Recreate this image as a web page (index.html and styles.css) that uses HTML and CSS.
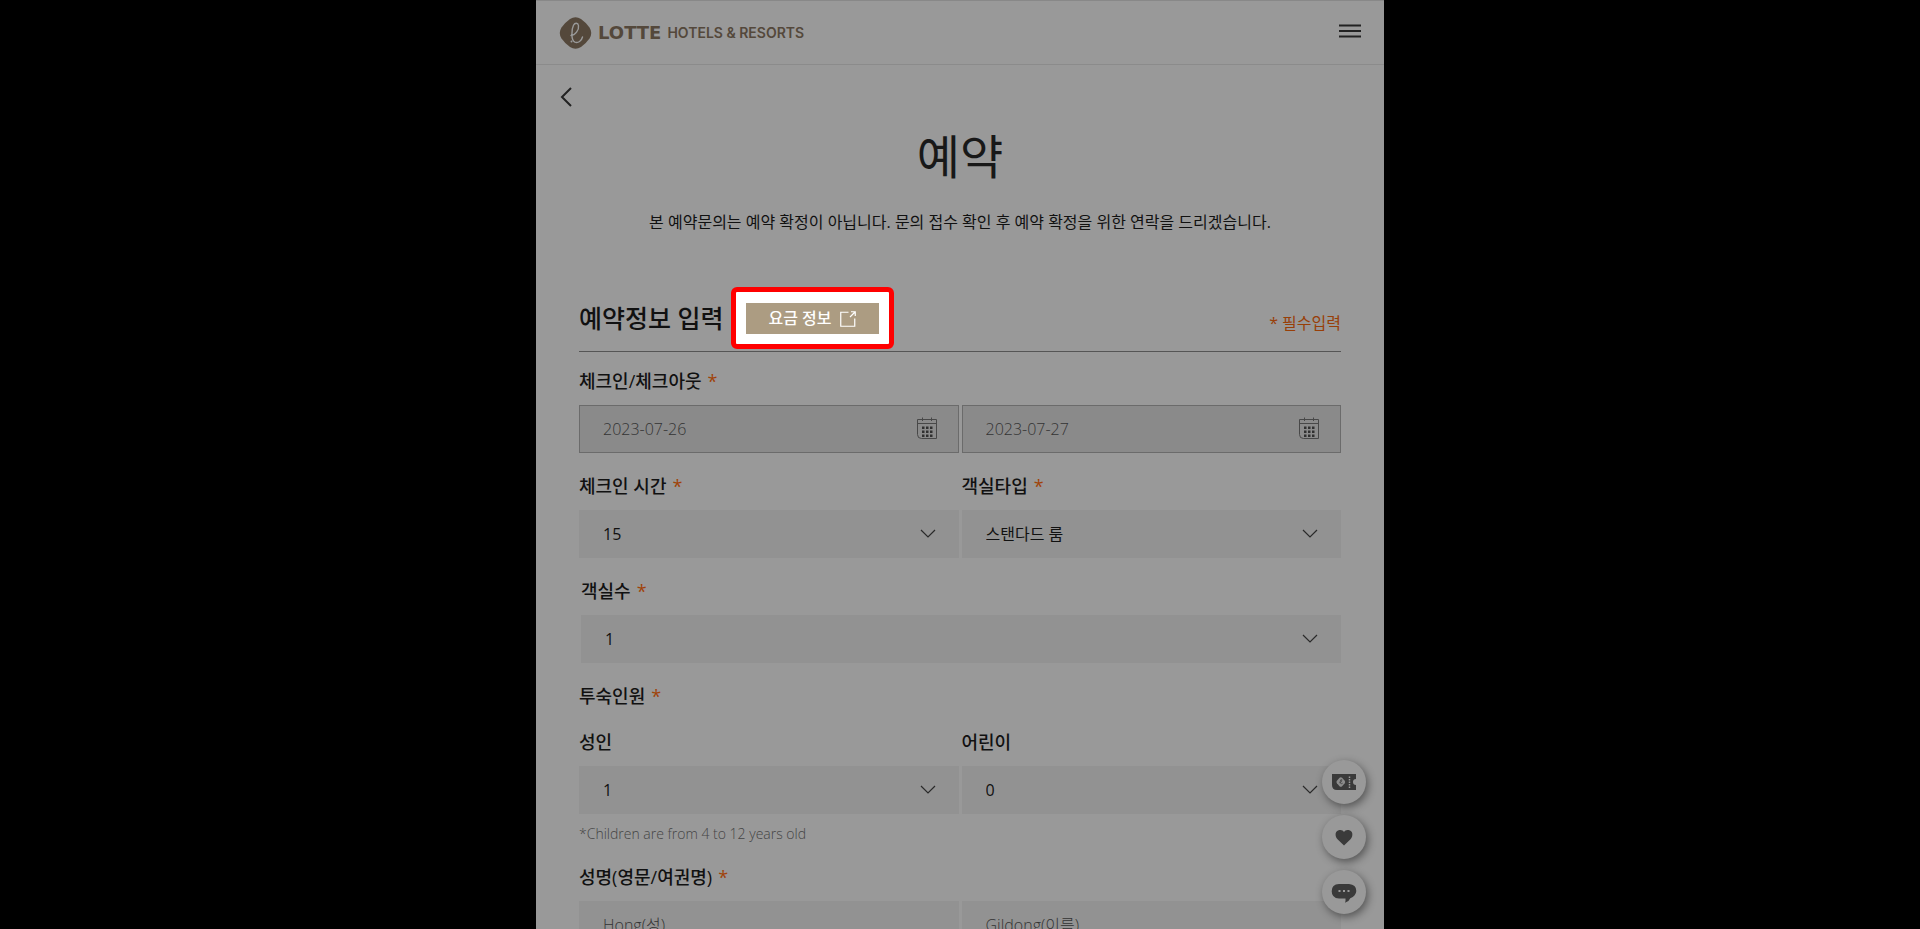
FILE: index.html
```html
<!DOCTYPE html>
<html lang="ko">
<head>
<meta charset="utf-8">
<meta name="viewport" content="width=device-width, initial-scale=1">
<title>예약 - LOTTE HOTELS &amp; RESORTS</title>
<link rel="stylesheet" href="styles.css">
</head>
<body>
<svg class="sprite" aria-hidden="true">
  <symbol id="calendar" viewBox="0 0 22 23">
    <path d="M1.5 2.5h19v19h-15q-4 0-4-4zM1.5 6.5h19M6.500 .5v3.500M15.500 .5v3.500" fill="none" stroke="#484848"/>
    <path d="M6 9.500h2.500V12H6zM10 9.500h2.500V12H10zM14 9.500h2.500V12H14zM6 13.500h2.500V16H6zM10 13.500h2.500V16H10zM14 13.500h2.500V16H14zM6 17.500h2.500V20H6zM10 17.500h2.500V20H10zM14 17.500h2.500V20H14z" fill="#303030"/>
  </symbol>
  <symbol id="chevron" viewBox="0 0 16 9"><path d="M1 1l7 7 7-7" fill="none" stroke="#2a2a2a" stroke-width="1.200"/></symbol>
</svg>
<div class="page">
  <header class="header">
    <a class="logo" href="#" aria-label="LOTTE HOTELS &amp; RESORTS">
      <svg class="logo-mark" viewBox="0 0 32 32" aria-hidden="true">
        <path d="M10.500 2Q16-1.500 21.500 2q5 3.500 8.500 8.500 3.500 5.500 0 11-3.500 5-8.500 8.500-5.500 3.500-11 0Q5.500 26.500 2 21.500q-3.500-5.500 0-11Q5.500 5.500 10.500 2z" fill="#54483b"/>
        <path d="M11.500 18.500C15.500 18.500 19.800 13 19 8.500c-.5-3-3.600-3-5-.3-2.200 4.300-2.600 15.300 1.400 17 3.300 1.200 6.600-1.200 7.600-5.200" fill="none" stroke="#999" stroke-width="1.400" stroke-linecap="round"/>
        <circle cx="12" cy="24.500" r="1" fill="#999"/>
      </svg>
      <span class="logo-name">LOTTE</span>
      <span class="logo-sub">HOTELS &amp; RESORTS</span>
    </a>
    <button class="icon-button" type="button" aria-label="메뉴">
      <svg class="menu-icon" viewBox="0 0 22 14"><path d="M0 1.500h22M0 7h22M0 12.500h22" stroke="#222" stroke-width="2"/></svg>
    </button>
  </header>
  <main class="main">
    <button class="icon-button back" type="button" aria-label="뒤로">
      <svg class="back-icon" viewBox="0 0 12 20"><path d="M11 1L2 10l9 9" fill="none" stroke="#222" stroke-width="2"/></svg>
    </button>
    <h1 class="title">예약</h1>
    <p class="intro">본 예약문의는 예약 확정이 아닙니다. 문의 접수 확인 후 예약 확정을 위한 연락을 드리겠습니다.</p>
    <form class="form">
      <div class="section-head">
        <h2 class="section-title">예약정보 입력</h2>
        <div class="highlight">
          <button class="rate-button" type="button">요금 정보
            <svg class="link-icon" viewBox="0 0 16 16" aria-hidden="true"><path d="M8.500 1.250H.75v14h14V7.500M10 6l5-5M11 .75h4.250V5" fill="none" stroke="#fff" stroke-width="1.200"/></svg>
          </button>
        </div>
        <span class="required-note">* 필수입력</span>
      </div>

      <div class="row">
        <div class="field">
          <label class="label first" for="checkin">체크인/체크아웃<span class="star">*</span></label>
          <div class="control"><input class="input date" id="checkin" type="text" value="2023-07-26" readonly><svg class="calendar"><use href="#calendar"/></svg></div>
        </div>
        <div class="field">
          <div class="control"><input class="input date" type="text" value="2023-07-27" aria-label="체크아웃" readonly><svg class="calendar"><use href="#calendar"/></svg></div>
        </div>
      </div>

      <div class="row">
        <div class="field">
          <label class="label" for="time">체크인 시간<span class="star">*</span></label>
          <div class="control"><select class="input" id="time"><option>15</option></select><svg class="chevron"><use href="#chevron"/></svg></div>
        </div>
        <div class="field">
          <label class="label" for="type">객실타입<span class="star">*</span></label>
          <div class="control"><select class="input" id="type"><option>스탠다드 룸</option></select><svg class="chevron"><use href="#chevron"/></svg></div>
        </div>
      </div>

      <div class="row single">
        <div class="field">
          <label class="label" for="rooms">객실수<span class="star">*</span></label>
          <div class="control"><select class="input" id="rooms"><option>1</option></select><svg class="chevron"><use href="#chevron"/></svg></div>
        </div>
      </div>

      <h3 class="label group">투숙인원<span class="star">*</span></h3>
      <div class="row">
        <div class="field">
          <label class="label" for="adults">성인</label>
          <div class="control"><select class="input" id="adults"><option>1</option></select><svg class="chevron"><use href="#chevron"/></svg></div>
        </div>
        <div class="field">
          <label class="label" for="children">어린이</label>
          <div class="control"><select class="input" id="children"><option>0</option></select><svg class="chevron"><use href="#chevron"/></svg></div>
        </div>
      </div>
      <p class="note">*Children are from 4 to 12 years old</p>

      <div class="row">
        <div class="field">
          <label class="label" for="last">성명(영문/여권명)<span class="star">*</span></label>
          <div class="control"><input class="input" id="last" type="text" placeholder="Hong(성)"></div>
        </div>
        <div class="field">
          <div class="control"><input class="input" type="text" placeholder="Gildong(이름)" aria-label="이름"></div>
        </div>
      </div>
    </form>
  </main>
  <nav class="floating" aria-label="바로가기">
    <button class="round" type="button" aria-label="쿠폰">
      <svg class="round-icon" viewBox="0 0 24 24">
        <path d="M0 4h24v5a3 3 0 0 0 0 6v5H5q-5 0-5-5z" fill="#3a3a3a"/>
        <path d="M7.500 7.800q1.300-1 2.600 0l2.600 2.900q1 1.300 0 2.600l-2.600 2.900q-1.300 1-2.600 0l-2.600-2.900q-1-1.300 0-2.600z" fill="#8c8c8c"/>
        <path d="M7.400 12.800q3-.8 2.500-3.100-1.600-.7-1.700 2 0 3 2.500 1.500" fill="none" stroke="#3a3a3a" stroke-width=".7"/>
        <path d="M17.500 6.500v12" stroke="#999" stroke-width="1.500" stroke-dasharray="1.500 1"/>
      </svg>
    </button>
    <button class="round" type="button" aria-label="관심">
      <svg class="round-icon" viewBox="0 0 24 24"><path d="M12 20.500L5.500 14.200C2.500 11 3 5.500 7.500 5 9.600 4.700 11.200 5.500 12 7c.8-1.500 2.400-2.300 4.500-2C21 5.500 21.500 11 18.500 14.200z" fill="#3a3a3a"/></svg>
    </button>
    <button class="round" type="button" aria-label="채팅">
      <svg class="round-icon" viewBox="0 0 24 24"><path d="M7 4h10q7.300.5 7.300 7-.3 5-6 7.200Q17 21.500 13 22.800q.8-2 .5-4.300H7Q-.3 18-.3 11.200T7 4z" fill="#3a3a3a"/><path d="M6.500 10h2v2h-2zM11 10h2v2h-2zM15.500 10h2v2h-2z" fill="#999"/></svg>
    </button>
  </nav>
</div>
</body>
</html>
```
FILE: styles.css
```css
* { box-sizing: border-box; }
body {
  margin: 0;
  background: #000;
  color: #111;
  font: 400 16px/24px "Open Sans", "Noto Sans CJK KR", sans-serif;
}
h1, h2, h3, p { margin: 0; }
button, input, select { font: inherit; color: inherit; }
button { border: 0; background: none; padding: 0; cursor: pointer; }
svg { display: block; }
.sprite { display: none; }

.page {
  position: relative;
  width: 100%;
  max-width: 848px;
  height: 100vh;
  margin: 0 auto;
  overflow: hidden;
  background: #999;
  border-top: 1px solid #888;
}
.header {
  display: flex;
  align-items: center;
  justify-content: space-between;
  height: 64px;
  padding: 0 23px;
  border-bottom: 1px solid #8b8b8b;
}
.logo {
  display: flex;
  align-items: center;
  color: #54483b;
  text-decoration: none;
}
.logo-mark { width: 33px; height: 32px; margin-right: 6px; }
.logo-name { margin-right: 6px; font: 700 18px/24px "DejaVu Sans", sans-serif; }
.logo-sub { font: 600 14px/24px Inter, sans-serif; }
.menu-icon { width: 22px; height: 14px; margin-bottom: 4px; }

.main { padding: 22px 43px 0; }
.back { display: block; margin-left: -19px; }
.back-icon { width: 12px; height: 20px; }
.title {
  margin-top: 16px;
  text-align: center;
  font-size: 47px;
  line-height: 66px;
  font-weight: 400;
  color: #181818;
}
.intro { margin-top: 21px; text-align: center; }
.form { margin-top: 53px; }

.section-head {
  display: flex;
  align-items: center;
  padding-bottom: 2px;
  border-bottom: 1px solid #555;
}
.section-title { font-size: 25px; line-height: 36px; font-weight: 500; }
.highlight {
  margin-left: 7px;
  padding: 11px 10px 10px;
  background: #fff;
  border: 5px solid #f00;
  border-radius: 6px;
}
.rate-button {
  display: flex;
  align-items: center;
  gap: 8px;
  padding: 0 23px;
  line-height: 31px;
  background: #ac9c82;
  color: #fff;
  font-weight: 500;
}
.link-icon { width: 16px; height: 16px; }
.required-note { margin: 10px 0 0 auto; color: #983f08; }

.row {
  display: grid;
  grid-template-columns: 1fr 1fr;
  column-gap: 3px;
  align-items: end;
}
.single { grid-template-columns: 1fr; padding-left: 2px; }
.label {
  display: block;
  padding: 20px 0 11px;
  font-size: 18px;
  line-height: 26px;
  font-weight: 500;
}
.first { padding-top: 16px; }
.group { padding-bottom: 0; }
.star { margin-left: 6px; color: #a04309; font-weight: 400; }
.control { position: relative; }
.input {
  display: block;
  width: 100%;
  height: 48px;
  padding: 0 24px;
  appearance: none;
  background: #929292;
  border: 0;
  border-radius: 0;
  outline: 0;
}
.input::placeholder { color: #333; opacity: 1; font-weight: 300; }
.date {
  padding: 0 23px;
  background: #8a8a8a;
  border: 1px solid #6b6b6b;
  color: #333;
  font-weight: 300;
}
.calendar { position: absolute; right: 21px; top: 12px; width: 22px; height: 23px; }
.chevron { position: absolute; right: 23px; top: 19px; width: 16px; height: 9px; }
.note {
  margin-top: 10px;
  font-size: 14px;
  line-height: 20px;
  font-weight: 300;
  color: #444;
}

.floating {
  position: absolute;
  right: 18px;
  bottom: 15px;
  display: grid;
  gap: 11px;
}
.round {
  display: grid;
  place-items: center;
  width: 44px;
  height: 44px;
  border-radius: 50%;
  background: #999;
  box-shadow: 2px 3px 8px rgba(0, 0, 0, .45);
}
.round-icon { width: 24px; height: 24px; overflow: visible; }
```
